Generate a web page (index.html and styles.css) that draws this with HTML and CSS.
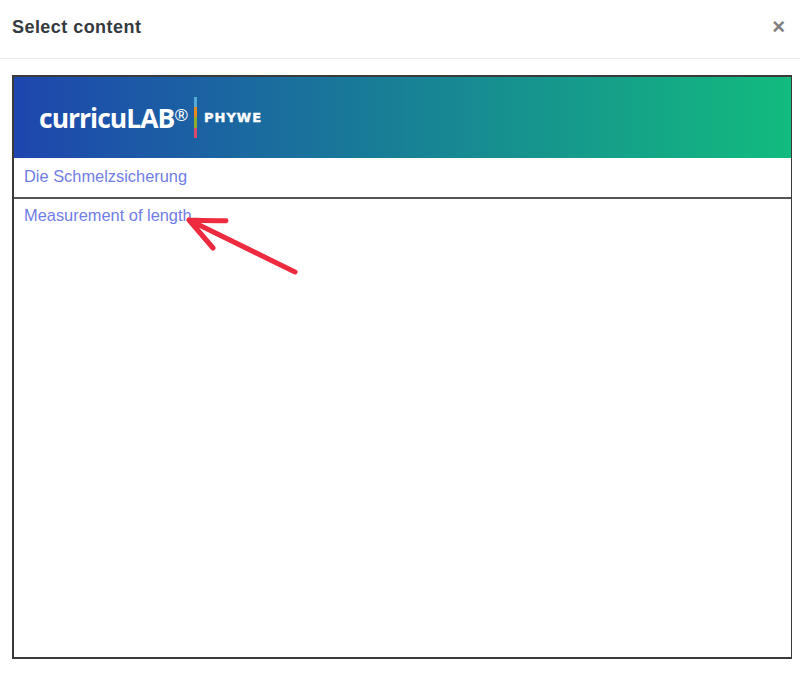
FILE: index.html
```html
<!DOCTYPE html>
<html lang="en">
<head>
    <meta charset="UTF-8">
    <title>Select content</title>
    <link rel="stylesheet" href="styles.css">
</head>
<body>
    <div class="modal">
        <div class="modal-header">
            <h5>Select content</h5>
            <span class="close">&times;</span>
        </div>
        <div class="modal-body">
            <div class="frame">
                <div class="banner">
                    <span class="brand">curricuLAB<sup>®</sup></span>
                    <span class="divider"></span>
                    <span class="phywe">PHYWE</span>
                </div>
                <div class="row row-first"><a href="#">Die Schmelzsicherung</a></div>
                <div class="row"><a href="#">Measurement of length</a></div>
            </div>
            <svg class="arrow" width="120" height="70" viewBox="0 0 120 70">
                <path d="M6 14 L112 66 M6 14 Q24 15 43 14.700 M6 14 L30 42" fill="none" stroke="#ee2a3f" stroke-width="5" stroke-linecap="round"/>
            </svg>
        </div>
    </div>
</body>
</html>
```

FILE: styles.css
```css
body {
    margin: 0;
    background: #fff;
    font-family: "Liberation Sans", Arial, sans-serif;
}

.modal {
    height: 674px;
    display: flex;
    flex-direction: column;
}

.modal-header {
    height: 59px;
    flex: none;
    display: flex;
    align-items: center;
    justify-content: space-between;
    padding: 0 15px 4px 12px;
    box-sizing: border-box;
    border-bottom: 1px solid #e9ecef;
}

.modal-header h5 {
    margin: 0;
    font-size: 18px;
    font-weight: bold;
    letter-spacing: 0.450px;
    color: #343a40;
}

.close {
    font-size: 22px;
    font-weight: bold;
    line-height: 1;
    color: #808080;
}

.modal-body {
    position: relative;
    padding: 16px 8px 15px 12px;
    flex: 1;
}

.frame {
    height: 584px;
    box-sizing: border-box;
    border: 2px solid #3a3a3a;
    border-right-width: 1px;
}

.banner {
    height: 81px;
    display: flex;
    align-items: center;
    padding-left: 25px;
    background: linear-gradient(90deg, #1e46ae 0%, #12bb7e 100%);
    color: #fff;
}

.brand {
    font-family: "Open Sans", sans-serif;
    font-size: 26.500px;
    font-weight: 700;
    width: 155px;
    letter-spacing: -1px;
    white-space: nowrap;
}

.brand sup {
    font-size: 17px;
    font-weight: normal;
    line-height: 0;
    vertical-align: 7px;
}

.divider {
    width: 3px;
    height: 41px;
    background: linear-gradient(#55a9d6 0 25%, #e98a1c 25% 50%, #8cae2c 50% 75%, #db4a6c 75% 100%);
}

.phywe {
    margin-left: 7px;
    font-family: "DejaVu Sans", sans-serif;
    font-size: 13px;
    font-weight: bold;
    letter-spacing: 1px;
    -webkit-text-stroke: 0.400px #fff;
}

.row {
    padding: 6px 10px;
    font-size: 16.400px;
    line-height: 20px;
}

.row-first {
    height: 41px;
    box-sizing: border-box;
    padding-top: 8px;
    border-bottom: 2px solid #555;
}

.row a {
    color: #6f7de6;
    text-decoration: none;
}

.arrow {
    position: absolute;
    left: 183px;
    top: 147px;
}
```
